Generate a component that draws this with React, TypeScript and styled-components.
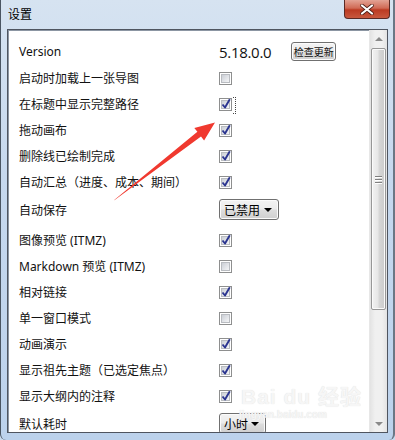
import styled, { createGlobalStyle } from "styled-components";

const GlobalStyle = createGlobalStyle`
  html, body {
    margin: 0;
    padding: 0;
    background: #c9dbef;
  }
  body {
    font-family: "Noto Sans", "Noto Sans CJK SC", sans-serif;
  }
`;

const Window = styled.div`
  position: relative;
  width: 395px;
  height: 440px;
  box-sizing: border-box;
  display: flex;
  flex-direction: column;
  border-left: 1px solid #4a5562;
  border-right: 2px solid #6b7785;
  border-bottom-left-radius: 6px;
  border-bottom-right-radius: 6px;
  background: linear-gradient(180deg, #d6e3f1 0%, #c6d8ee 40%, #bcd2ec 100%);
  overflow: hidden;
`;

const TitleBar = styled.div`
  height: 29px;
  display: flex;
  align-items: flex-start;
  padding-left: 7px;
  padding-right: 3px;
`;

const Title = styled.div`
  margin-top: 8px;
  font-size: 12px;
  line-height: 14px;
  color: #000;
`;

const CloseButton = styled.div`
  margin-left: auto;
  width: 46px;
  height: 19px;
  box-sizing: border-box;
  border: 1px solid #5a2a25;
  border-top: none;
  border-bottom-left-radius: 4px;
  border-bottom-right-radius: 4px;
  background: linear-gradient(180deg, #e3a394 0%, #d06a55 45%, #bb3a22 55%, #c8583e 100%);
  display: flex;
  align-items: center;
  justify-content: center;
`;

const Client = styled.div`
  flex: 1;
  margin: 0 5px 7px 6px;
  display: flex;
  border: 1px solid #4f5560;
  box-shadow: inset 1px 1px 0 #8c96a3;
  background: #fff;
  min-height: 0;
`;

const List = styled.div`
  flex: 1;
  padding: 8px 0 0 11px;
  overflow: hidden;
`;

const Row = styled.div<{ $h: number; $pb?: number }>`
  display: grid;
  grid-template-columns: 200px 1fr;
  align-items: center;
  height: ${(p) => p.$h}px;
  padding-bottom: ${(p) => p.$pb ?? 0}px;
  box-sizing: border-box;
`;

const Label = styled.div`
  font-size: 12px;
  color: #111;
  white-space: nowrap;
`;

const Control = styled.div`
  display: flex;
  align-items: center;
  gap: 20px;
`;

const VersionText = styled.div`
  font-family: "Open Sans", sans-serif;
  font-size: 15px;
  font-weight: 400;
  color: #111;
  letter-spacing: -0.3px;
`;

const PushButton = styled.div`
  width: 45px;
  height: 19px;
  box-sizing: border-box;
  border: 1px solid #707070;
  border-radius: 3px;
  background: linear-gradient(180deg, #f4f4f4 0%, #ebebeb 48%, #dddddd 52%, #cfcfcf 100%);
  font-size: 10px;
  color: #111;
  display: flex;
  align-items: center;
  justify-content: center;
  box-shadow: inset 0 0 0 1px #fcfcfc;
`;

const Box = styled.div<{ $focus?: boolean }>`
  position: relative;
  width: 13px;
  height: 13px;
  box-sizing: border-box;
  border: 1px solid #8e8f8f;
  background: #fff;
  padding: 2px;
  &::after {
    content: "";
    display: ${(p) => (p.$focus ? "block" : "none")};
    position: absolute;
    left: 13px;
    top: -2px;
    width: 2px;
    height: 15px;
    border: 1px dotted #444;
    border-left: none;
  }
`;

const BoxFill = styled.div`
  width: 7px;
  height: 7px;
  background: linear-gradient(135deg, #cbcfd5 0%, #e4e6ea 60%, #f4f5f7 100%);
  border: 1px solid #b9bcc1;
  box-sizing: content-box;
  margin: -1px;
  position: relative;
`;

const Check = styled.svg`
  position: absolute;
  left: -1px;
  top: -3px;
  width: 10px;
  height: 11px;
`;

const Select = styled.div<{ $w: number }>`
  width: ${(p) => p.$w}px;
  height: 21px;
  box-sizing: border-box;
  border: 1px solid #707070;
  border-radius: 3px;
  background: linear-gradient(180deg, #f3f3f3 0%, #ebebeb 48%, #dddddd 52%, #cfcfcf 100%);
  box-shadow: inset 0 0 0 1px #fbfbfb;
  display: flex;
  align-items: center;
  justify-content: space-between;
  padding: 0 6px 0 4px;
  font-size: 12px;
  color: #000;
`;

const Caret = styled.div`
  width: 0;
  height: 0;
  border-left: 4px solid transparent;
  border-right: 4px solid transparent;
  border-top: 4px solid #000;
`;

const ScrollBar = styled.div`
  width: 17px;
  display: flex;
  flex-direction: column;
  align-items: center;
  background: linear-gradient(90deg, #e3e3e3 0%, #f0f0f0 30%, #f0f0f0 70%, #e3e3e3 100%);
  border-left: 1px solid #e7e7e7;
`;

const ArrowBtn = styled.div`
  height: 17px;
  width: 100%;
  display: flex;
  align-items: center;
  justify-content: center;
`;

const Tri = styled.div<{ $up?: boolean }>`
  width: 0;
  height: 0;
  border-left: 4px solid transparent;
  border-right: 4px solid transparent;
  ${(p) =>
    p.$up ? "border-bottom: 4px solid #8a8a8a;" : "border-top: 4px solid #8a8a8a;"}
`;

const Track = styled.div`
  flex: 1;
  width: 100%;
  padding-top: 1px;
`;

const Thumb = styled.div`
  margin: 0 auto;
  width: 15px;
  height: 262px;
  box-sizing: border-box;
  border: 1px solid #979797;
  border-radius: 2px;
  background: linear-gradient(90deg, #f2f2f2 0%, #e6e6e6 45%, #d6d6d6 55%, #cbcbcb 100%);
  box-shadow: inset 0 0 0 1px #fafafa;
  display: flex;
  flex-direction: column;
  align-items: center;
  justify-content: center;
  gap: 2px;
`;

const Grip = styled.div`
  width: 7px;
  height: 1px;
  background: #7f7f7f;
  box-shadow: 0 1px 0 #fff;
`;

const Overlay = styled.svg`
  position: absolute;
  left: 0;
  top: 0;
  pointer-events: none;
`;

const Watermark = styled.div`
  position: absolute;
  left: 240px;
  top: 386px;
  color: #f6f6f6;
  text-shadow: 0 0 1px #dadada;
  font-family: "Liberation Sans", "Noto Sans CJK SC", sans-serif;
  pointer-events: none;
`;

const WmTop = styled.div`
  font-size: 21px;
  font-weight: bold;
  line-height: 22px;
  letter-spacing: 1px;
`;

const WmBottom = styled.div`
  font-size: 10px;
  line-height: 14px;
  font-weight: bold;
  margin-left: -2px;
`;

type Item =
  | { label: string; kind: "check"; on: boolean; focus?: boolean }
  | { label: string; kind: "select"; value: string; w: number };

const items: Item[] = [
  { label: "启动时加载上一张导图", kind: "check", on: false },
  { label: "在标题中显示完整路径", kind: "check", on: true, focus: true },
  { label: "拖动画布", kind: "check", on: true },
  { label: "删除线已绘制完成", kind: "check", on: true },
  { label: "自动汇总（进度、成本、期间）", kind: "check", on: true },
  { label: "自动保存", kind: "select", value: "已禁用", w: 60 },
  { label: "图像预览 (ITMZ)", kind: "check", on: true },
  { label: "Markdown 预览 (ITMZ)", kind: "check", on: false },
  { label: "相对链接", kind: "check", on: true },
  { label: "单一窗口模式", kind: "check", on: false },
  { label: "动画演示", kind: "check", on: true },
  { label: "显示祖先主题（已选定焦点）", kind: "check", on: true },
  { label: "显示大纲内的注释", kind: "check", on: true },
  { label: "默认耗时", kind: "select", value: "小时", w: 47 },
];

function CheckBox({ on, focus }: { on: boolean; focus?: boolean }) {
  return (
    <Box $focus={focus}>
      <BoxFill>
        {on && (
          <Check viewBox="0 0 10 11">
            <path d="M1.5 6.5 L4 9.5 L8.8 1.2" fill="none" stroke="#2b3590" strokeWidth="1.9" strokeLinejoin="round" />
          </Check>
        )}
      </BoxFill>
    </Box>
  );
}

export default function App() {
  return (
    <>
      <GlobalStyle />
      <Window>
        <TitleBar>
          <Title>设置</Title>
          <CloseButton>
            <svg width="14" height="11" viewBox="0 0 14 11">
              <path d="M2 1.5 L12 9.5 M12 1.5 L2 9.5" stroke="#4a1c14" strokeWidth="3.6" strokeLinecap="round" />
              <path d="M2 1.5 L12 9.5 M12 1.5 L2 9.5" stroke="#fff" strokeWidth="2.2" strokeLinecap="round" />
            </svg>
          </CloseButton>
        </TitleBar>
        <Client>
          <List>
            <Row $h={27}>
              <Label>Version</Label>
              <Control>
                <VersionText>5.18.0.0</VersionText>
                <PushButton>检查更新</PushButton>
              </Control>
            </Row>
            {items.map((it) =>
              it.kind === "check" ? (
                <Row $h={26} key={it.label}>
                  <Label>{it.label}</Label>
                  <Control>
                    <CheckBox on={it.on} focus={it.focus} />
                  </Control>
                </Row>
              ) : (
                <Row $h={32} $pb={3} key={it.label}>
                  <Label>{it.label}</Label>
                  <Control>
                    <Select $w={it.w}>
                      <span>{it.value}</span>
                      <Caret />
                    </Select>
                  </Control>
                </Row>
              )
            )}
          </List>
          <ScrollBar>
            <ArrowBtn>
              <Tri $up />
            </ArrowBtn>
            <Track>
              <Thumb>
                <Grip />
                <Grip />
                <Grip />
              </Thumb>
            </Track>
            <ArrowBtn>
              <Tri />
            </ArrowBtn>
          </ScrollBar>
        </Client>
        <Watermark>
          <WmTop>Bai du 经验</WmTop>
          <WmBottom>jingyan.baidu.com</WmBottom>
        </Watermark>
        <Overlay width="395" height="440">
          <polygon
            points="113,200.6 113.8,199.4 196.4,131.8 193.3,127.9 214,122.5 203.1,140.5 200,136.6"
            fill="#f0392f"
          />
        </Overlay>
      </Window>
    </>
  );
}
